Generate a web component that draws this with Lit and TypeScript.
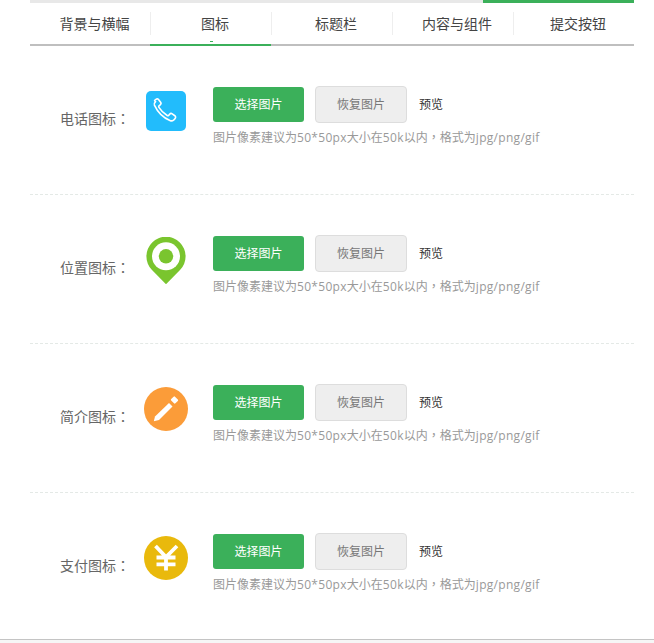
import { LitElement, html, css, svg } from "lit";
import { customElement } from "lit/decorators.js";

const tabs = ["背景与横幅", "图标", "标题栏", "内容与组件", "提交按钮"];

const phone = svg`<svg class="ic" width="40" height="40" viewBox="0 0 40 40"><rect width="40" height="40" rx="5" fill="#22bcfc"/><path d="M8.600 9.600c1.300-1.500 2.800-2.200 3.700-1.300l2.300 3c.7 1 .5 1.900-.4 2.600l-1.200 1c-.4.400-.4.900-.1 1.400 2 3.200 4.800 6 8.300 8.200.5.300 1 .3 1.400-.1l1-1.200c.7-.8 1.700-1 2.600-.4l3 2.200c1 .8.300 2.500-1.300 3.800-1.100.9-2.300 1.400-3.500.9-7.300-2.900-12.500-8-16-15.600-.5-1.300.3-2.700 1.200-3.500z" fill="none" stroke="#fff" stroke-width="1.600" stroke-linejoin="round"/></svg>`;
const pin = svg`<svg class="ic" width="40" height="48" viewBox="0 0 40 48"><path d="M20 47.200L6 33A19.600 19.600 0 1 1 34 33z" fill="#7ac52e"/><circle cx="20" cy="19.300" r="14" fill="#fff"/><circle cx="20" cy="19.300" r="7.200" fill="#7ac52e"/></svg>`;
const pencil = svg`<svg class="ic" width="44" height="44" viewBox="0 0 44 44"><circle cx="22" cy="22" r="22" fill="#fb9c39"/><path d="M9.800 34.200L11 29.500 25 16 28.500 19.500 15 33z" fill="#fff"/><rect x="27.500" y="10.300" width="6" height="5.400" rx="1" transform="rotate(45 30.500 13)" fill="#fff"/></svg>`;
const yuan = svg`<svg class="ic" width="44" height="44" viewBox="0 0 44 44"><circle cx="22" cy="22" r="22" fill="#e9b90c"/><path d="M11.500 10L22 21 33 10M12.500 21.500h19M12.500 28.300h19M22 20.500V34.500" fill="none" stroke="#fff" stroke-width="3.800"/></svg>`;

const rows = [
  { label: "电话图标", icon: phone, cls: "i1" },
  { label: "位置图标", icon: pin, cls: "i2" },
  { label: "简介图标", icon: pencil, cls: "i3" },
  { label: "支付图标", icon: yuan, cls: "i4" },
];

@customElement("app-root")
export class AppRoot extends LitElement {
  static styles = css`
    :host {
      display: block;
      height: 643px;
      background: #f6f6f6;
      font-family: "Open Sans", "Noto Sans CJK SC", "Noto Sans", sans-serif;
      overflow: hidden;
    }
    * { box-sizing: border-box; }
    .page {
      height: 640px;
      padding-left: 30px;
      background: #fff;
      border-bottom: 1px solid #c4c4c4;
    }
    .wrap { width: 604px; }
    .progress {
      height: 3px;
      background: #e8e8e8;
      display: flex;
      justify-content: flex-end;
    }
    .progress div { width: 151px; background: #3bb05a; }
    .tabs {
      display: flex;
      height: 43px;
      border-bottom: 2px solid #bfbfbf;
    }
    .tab {
      width: 121px;
      height: 43px;
      position: relative;
      font-size: 14px;
      color: #444;
      text-align: center;
      padding: 8px 0 0 9px;
      line-height: 26px;
    }
    .tab:first-child { width: 120px; }
    .tab + .tab::before {
      content: "";
      position: absolute;
      left: 0;
      top: 9px;
      height: 23px;
      border-left: 1px solid #eee;
    }
    .tab.on { border-bottom: 2px solid #3bb05a; }
    .tab.on::after {
      content: "";
      position: absolute;
      left: 50%;
      bottom: 2px;
      margin-left: -1px;
      width: 3px;
      height: 1px;
      background: #3bb05a;
    }
    .row {
      display: flex;
      height: 149px;
      padding-top: 40px;
      border-bottom: 1px dashed #e4e9e6;
    }
    .row:last-child { border-bottom: 0; }
    .label {
      width: 114px;
      padding: 22px 0 0 30px;
      font-size: 14px;
      line-height: 20px;
      color: #666;
      white-space: nowrap;
    }
    .colon { font-family: "Noto Sans CJK TC", sans-serif; }
    .comma { font-family: "Noto Sans CJK TC", sans-serif; }
    .lat { letter-spacing: 0.3px; }
    .slot {
      width: 44px;
      display: flex;
      justify-content: center;
      align-items: flex-start;
    }
    .ic { display: block; }
    .i1 { padding-top: 5px; }
    .i2 { padding-top: 2px; }
    .i3 { padding-top: 3px; }
    .i4 { padding-top: 3px; }
    .main { margin-left: 25px; }
    .btns { display: flex; align-items: center; height: 37px; }
    .btn {
      border-radius: 3px;
      font-size: 12px;
      line-height: 36px;
      text-align: center;
    }
    .pick {
      width: 91px;
      height: 35px;
      background: #3bb05a;
      color: #fff;
    }
    .reset {
      width: 92px;
      height: 37px;
      margin-left: 11px;
      background: #eee;
      border: 1px solid #ddd;
      border-radius: 4px;
      color: #777;
    }
    .preview {
      margin-left: 12px;
      font-size: 12px;
      line-height: 38px;
      height: 37px;
      color: #333;
    }
    .hint {
      margin-top: 4px;
      font-size: 12px;
      line-height: 20px;
      color: #999;
      white-space: nowrap;
    }
  `;

  render() {
    return html`<div class="page"><div class="wrap">
      <div class="progress"><div></div></div>
      <div class="tabs">
        ${tabs.map((t) => html`<div class="tab ${t === "图标" ? "on" : ""}">${t}</div>`)}
      </div>
      ${rows.map(
        (r) => html`<div class="row">
          <div class="label">${r.label}<span class="colon">：</span></div>
          <div class="slot ${r.cls}">${r.icon}</div>
          <div class="main">
            <div class="btns">
              <div class="btn pick">选择图片</div>
              <div class="btn reset">恢复图片</div>
              <div class="preview">预览</div>
            </div>
            <div class="hint">图片像素建议为<span class="lat">50*50px</span>大小在<span class="lat">50k</span>以内<span class="comma">，</span>格式为<span class="lat">jpg/png/gif</span></div>
          </div>
        </div>`
      )}
    </div></div>`;
  }
}
